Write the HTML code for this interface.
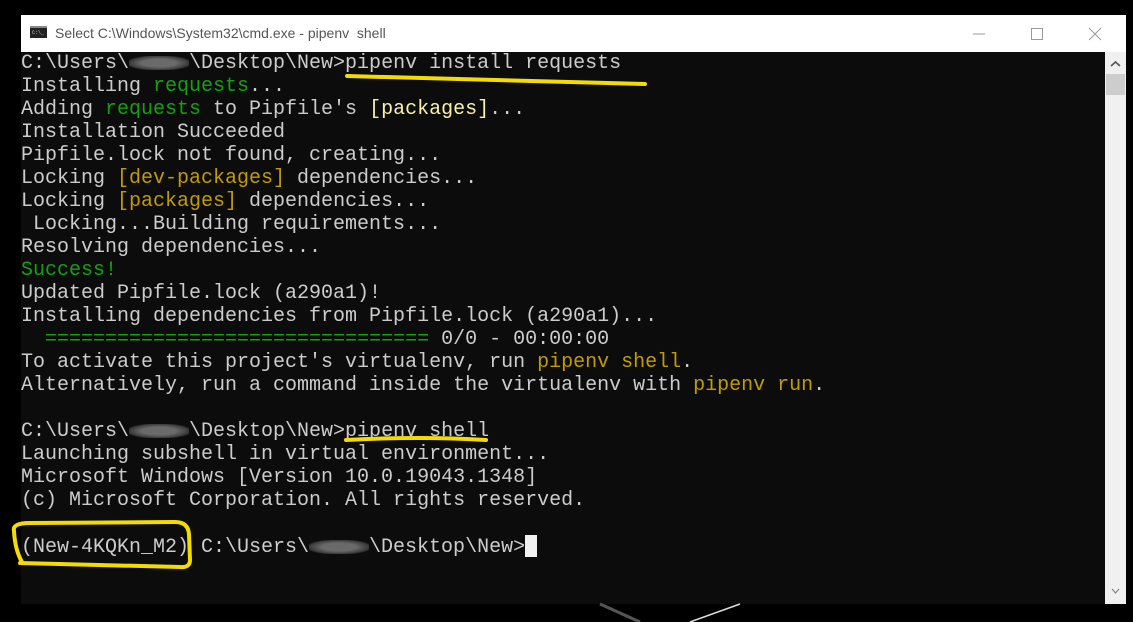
<!DOCTYPE html>
<html><head><meta charset="utf-8"><style>
html,body{margin:0;padding:0;background:#000;width:1133px;height:622px;overflow:hidden;position:relative}
.win{position:absolute;left:21px;top:15px;width:1105px;height:589px;background:#0c0c0c}
.title{position:absolute;left:0;top:0;width:1105px;height:37px;background:#fff}
.title .t{position:absolute;left:34px;top:10px;font:14px "Liberation Sans",sans-serif;color:#555}
.term{position:absolute;left:0;top:37px;width:1084px;height:552px;overflow:hidden}
pre{margin:0;font:20px/23px "Liberation Mono",monospace;color:#cccccc;white-space:pre}
.g{color:#13a10e}.y{color:#c19c00}.ly{color:#f9f1a5}
.b{display:inline-block;width:60px;height:14px;vertical-align:-2px;background:radial-gradient(ellipse at center,#6a6a6a 40%,#3a3a3a 70%,transparent 80%)}
.cur{display:inline-block;width:12px;height:22px;background:#f2f2f2;vertical-align:-5px}
.sb{position:absolute;left:1084px;top:37px;width:21px;height:552px;background:#f0f0f0}
</style></head><body>
<div class="win">
<div class="title">
<svg style="position:absolute;left:9px;top:11px" width="17" height="12"><rect width="17" height="12" fill="#222"/><rect x="0" y="0" width="17" height="2" fill="#888"/><text x="2" y="8" font-size="5" fill="#ccc" font-family="Liberation Mono">C:\_</text></svg>
<div class="t">Select C:\Windows\System32\cmd.exe - pipenv&nbsp; shell</div>
<svg style="position:absolute;left:940px;top:10px" width="160" height="18">
<line x1="12" y1="9" x2="24" y2="9" stroke="#999" stroke-width="1"/>
<rect x="70.5" y="3.5" width="11" height="11" fill="none" stroke="#999"/>
<line x1="128" y1="3" x2="140" y2="15" stroke="#999"/><line x1="140" y1="3" x2="128" y2="15" stroke="#999"/>
</svg>
</div>
<div class="term"><pre>C:\Users\<span class="b"></span>\Desktop\New>pipenv install requests
Installing <span class="g">requests</span>...
Adding <span class="g">requests</span> to Pipfile's <span class="ly">[packages]</span>...
Installation Succeeded
Pipfile.lock not found, creating...
Locking <span class="y">[dev-packages]</span> dependencies...
Locking <span class="y">[packages]</span> dependencies...
 Locking...Building requirements...
Resolving dependencies...
<span class="g">Success!</span>
Updated Pipfile.lock (a290a1)!
Installing dependencies from Pipfile.lock (a290a1)...
  <span class="g">================================</span> 0/0 - 00:00:00
To activate this project's virtualenv, run <span class="y">pipenv shell</span>.
Alternatively, run a command inside the virtualenv with <span class="y">pipenv run</span>.

C:\Users\<span class="b"></span>\Desktop\New>pipenv shell
Launching subshell in virtual environment...
Microsoft Windows [Version 10.0.19043.1348]
(c) Microsoft Corporation. All rights reserved.

(New-4KQKn_M2) C:\Users\<span class="b"></span>\Desktop\New><span class="cur"></span></pre></div>
<div class="sb">
<svg style="position:absolute;left:5px;top:8px" width="11" height="8"><polyline points="1,6 5.5,2 10,6" fill="none" stroke="#555" stroke-width="1.6"/></svg>
<div style="position:absolute;left:1px;top:22px;width:19px;height:21px;background:#cdcdcd"></div>
<svg style="position:absolute;left:6px;top:536px" width="9" height="6"><polyline points="1,1 4.5,5 8,1" fill="none" stroke="#777" stroke-width="1"/></svg>
</div>
</div>
<svg style="position:absolute;left:0;top:0" width="1133" height="622">
<path d="M347 76 Q480 80 645 84" stroke="#f5dc00" stroke-width="4" fill="none" stroke-linecap="round"/>
<path d="M346 440 Q420 436 486 440" stroke="#f5dc00" stroke-width="4" fill="none" stroke-linecap="round"/>
<path d="M14 531 Q12 523 30 523 L175 522 Q188 522 189 534 L190 560 Q190 568 180 567 L20 563 M14 531 Q15 550 22 562" stroke="#f5dc00" stroke-width="4" fill="none" stroke-linecap="round"/>
<path d="M690 622 L740 604" stroke="#ddd" stroke-width="1.5" fill="none"/>
<path d="M600 604 L640 622" stroke="#555" stroke-width="3" fill="none"/>
</svg>
</body></html>
